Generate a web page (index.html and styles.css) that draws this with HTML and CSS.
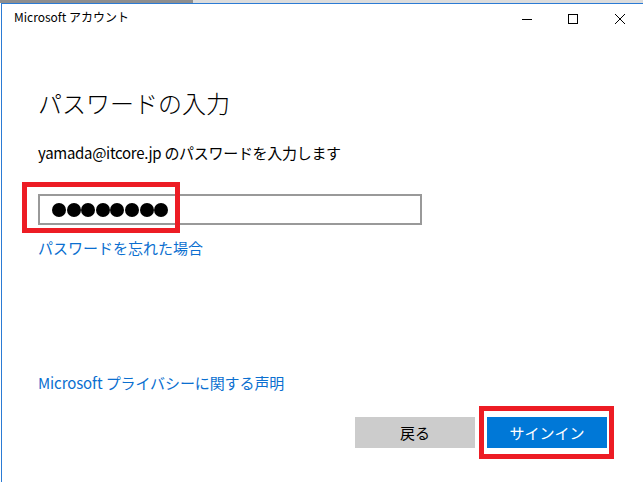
FILE: index.html
```html
<!DOCTYPE html>
<html lang="ja">
<head>
    <meta charset="UTF-8">
    <meta name="viewport" content="width=device-width, initial-scale=1.0">
    <title>Microsoft アカウント</title>
    <link rel="stylesheet" href="styles.css">
</head>
<body>
    <div class="topstrip">
        <div class="topstrip-dark"></div>
    </div>
    <div class="window">
        <div class="titlebar">
            <span class="title">Microsoft アカウント</span>
            <div class="controls">
                <button class="ctl" aria-label="最小化">
                    <svg width="10" height="10" viewBox="0 0 10 10"><path d="M0 5.5h10" stroke="#000" stroke-width="1"/></svg>
                </button>
                <button class="ctl" aria-label="最大化">
                    <svg width="10" height="10" viewBox="0 0 10 10"><rect x="0.5" y="0.5" width="9" height="9" fill="none" stroke="#000" stroke-width="1"/></svg>
                </button>
                <button class="ctl" aria-label="閉じる">
                    <svg width="10" height="10" viewBox="0 0 10 10"><path d="M0 0L10 10M10 0L0 10" stroke="#000" stroke-width="1"/></svg>
                </button>
            </div>
        </div>

        <div class="content">
            <h1 class="heading">パスワードの入力</h1>
            <p class="subtitle">yamada@itcore.jp のパスワードを入力します</p>

            <div class="field-wrap">
                <div class="field">
                    <span class="dot"></span><span class="dot"></span><span class="dot"></span><span class="dot"></span>
                    <span class="dot"></span><span class="dot"></span><span class="dot"></span><span class="dot"></span>
                </div>
                <div class="mark mark-field"></div>
            </div>

            <a class="link forgot" href="#">パスワードを忘れた場合</a>

            <a class="link privacy" href="#">Microsoft プライバシーに関する声明</a>

            <div class="actions">
                <button class="btn btn-back">戻る</button>
                <div class="signin-wrap">
                    <button class="btn btn-signin">サインイン</button>
                    <div class="mark mark-signin"></div>
                </div>
            </div>
        </div>
    </div>
</body>
</html>
```

FILE: styles.css
```css
* {
    box-sizing: border-box;
}

body {
    margin: 0;
    width: 643px;
    height: 482px;
    overflow: hidden;
    background: #fff;
    font-family: "Noto Sans CJK JP", "Noto Sans", sans-serif;
    color: #000;
}

.topstrip {
    height: 3px;
    background: #dcdcdc;
}

.topstrip-dark {
    width: 193px;
    height: 3px;
    background: #8e8e8e;
}

.window {
    margin-left: 1px;
    height: 479px;
    border-top: 1px solid #2b7bd4;
    border-left: 1px solid #2b7bd4;
}

.titlebar {
    display: flex;
    justify-content: space-between;
    height: 30px;
}

.title {
    padding: 5px 0 0 12px;
    font-size: 12px;
    line-height: 16px;
    color: #000;
}

.controls {
    display: flex;
}

.ctl {
    width: 46px;
    height: 30px;
    border: none;
    background: transparent;
    padding: 0;
    display: flex;
    align-items: center;
    justify-content: center;
}

.ctl:last-child {
    width: 47px;
}

.content {
    display: flex;
    flex-direction: column;
    align-items: flex-start;
    padding-left: 36px;
}

.heading {
    margin: 53px 0 0;
    font-size: 24px;
    line-height: 32px;
    font-weight: 300;
}

.subtitle {
    margin: 24px 0 0;
    font-size: 15px;
    line-height: 20px;
    letter-spacing: -0.3px;
}

.field-wrap {
    position: relative;
    margin-top: 31px;
}

.field {
    width: 384px;
    height: 31px;
    border: 2px solid #999999;
    padding-left: 12px;
    display: flex;
    align-items: center;
    gap: 0.6px;
}

.dot {
    width: 14px;
    height: 14px;
    border-radius: 50%;
    background: #000;
}

.mark {
    position: absolute;
    border: 5px solid #ed1c24;
}

.mark-field {
    left: -16px;
    top: -12px;
    width: 158px;
    height: 51px;
}

.link {
    font-size: 15px;
    line-height: 20px;
    color: #0b6fd0;
    text-decoration: none;
}

.forgot {
    margin-top: 13px;
}

.privacy {
    margin-top: 115px;
    letter-spacing: -0.1px;
}

.actions {
    align-self: stretch;
    display: flex;
    justify-content: flex-end;
    gap: 12px;
    margin-top: 24px;
    padding-right: 36px;
}

.btn {
    width: 120px;
    height: 31px;
    border: none;
    padding: 0;
    font-family: inherit;
    font-size: 15px;
}

.btn-back {
    background: #cccccc;
    color: #000;
}

.btn-signin {
    background: #0078d7;
    color: #fff;
    display: block;
}

.signin-wrap {
    position: relative;
}

.mark-signin {
    left: -8px;
    top: -11px;
    width: 135px;
    height: 53px;
}
```
